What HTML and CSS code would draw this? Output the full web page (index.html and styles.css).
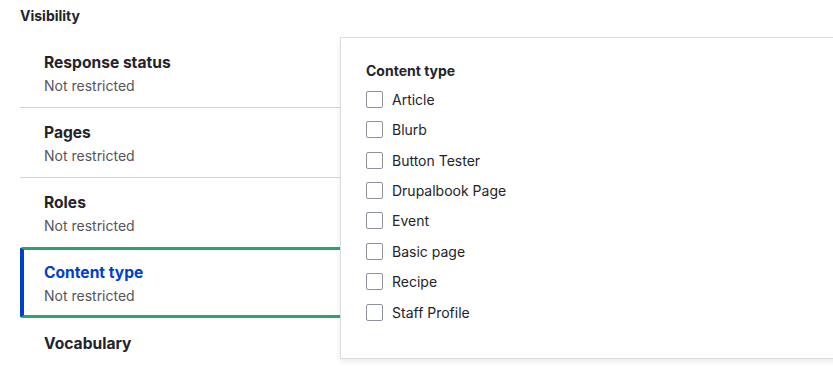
FILE: index.html
```html
<!DOCTYPE html>
<html lang="en">
<head>
    <meta charset="UTF-8">
    <meta name="viewport" content="width=device-width, initial-scale=1.0">
    <title>Visibility</title>
    <link rel="stylesheet" href="styles.css">
</head>
<body>

    <div class="details">
        <div class="details-title">Visibility</div>

        <div class="vtabs">
            <!-- Tab menu -->
            <ul class="vtabs-menu">
                <li class="vtab">
                    <span class="vtab-title">Response status</span>
                    <span class="vtab-summary">Not restricted</span>
                </li>
                <li class="vtab">
                    <span class="vtab-title">Pages</span>
                    <span class="vtab-summary">Not restricted</span>
                </li>
                <li class="vtab">
                    <span class="vtab-title">Roles</span>
                    <span class="vtab-summary">Not restricted</span>
                </li>
                <li class="vtab is-selected">
                    <span class="vtab-title">Content type</span>
                    <span class="vtab-summary">Not restricted</span>
                </li>
                <li class="vtab">
                    <span class="vtab-title">Vocabulary</span>
                </li>
            </ul>

            <!-- Active pane -->
            <div class="vtabs-pane">
                <div class="fieldset-legend">Content type</div>
                <div class="checkboxes">
                    <label class="check"><span class="box"></span>Article</label>
                    <label class="check"><span class="box"></span>Blurb</label>
                    <label class="check"><span class="box"></span>Button Tester</label>
                    <label class="check"><span class="box"></span>Drupalbook Page</label>
                    <label class="check"><span class="box"></span>Event</label>
                    <label class="check"><span class="box"></span>Basic page</label>
                    <label class="check"><span class="box"></span>Recipe</label>
                    <label class="check"><span class="box"></span>Staff Profile</label>
                </div>
            </div>
        </div>
    </div>

</body>
</html>
```

FILE: styles.css
```css
body {
    font-family: Inter, "Noto Sans", sans-serif;
    background-color: #fff;
    color: #232429;
    margin: 0;
    padding: 0;
    overflow: hidden;
}

.details-title {
    font-size: 14px;
    font-weight: 700;
    line-height: 18px;
    padding: 7px 20px 0;
}

.vtabs {
    display: flex;
    align-items: flex-start;
    margin-top: 12px;
    margin-left: 20px;
}

.vtabs-menu {
    list-style: none;
    margin: 0;
    padding: 0;
    width: 320px;
    flex-shrink: 0;
}

.vtab {
    display: flex;
    flex-direction: column;
    border-top: 1px solid #d3d4d9;
    padding: 13px 24px 10px;
}

.vtab:first-child {
    border-top-color: transparent;
}

.vtab-title {
    font-size: 15.6px;
    font-weight: 700;
    line-height: 24px;
}

.vtab-summary {
    font-size: 14px;
    line-height: 22px;
    color: #55565b;
}

.vtab.is-selected {
    border-top: 3px solid #2ba66a;
    border-bottom: 3px solid #2ba66a;
    border-left: 4px solid #003ecc;
    border-radius: 3px 0 0 3px;
    padding: 11px 24px 8px 20px;
}

.vtab.is-selected .vtab-title {
    color: #003ecc;
}

.vtab.is-selected + .vtab {
    border-top-color: transparent;
}

.vtabs-pane {
    flex: 1;
    margin-right: -20px;
    height: 322px;
    box-sizing: border-box;
    border: 1px solid #dcdde1;
    box-shadow: 0 3px 6px rgba(0, 0, 0, 0.08);
    padding: 24px 25px 0;
    background-color: #fff;
}

.fieldset-legend {
    font-size: 14px;
    font-weight: 700;
    line-height: 18px;
    margin-bottom: 4px;
}

.check {
    display: flex;
    align-items: center;
    height: 30.45px;
    font-size: 14px;
}

.box {
    width: 17px;
    height: 17px;
    box-sizing: border-box;
    border: 1px solid #8e929c;
    border-radius: 2px;
    margin-right: 9px;
}
```
